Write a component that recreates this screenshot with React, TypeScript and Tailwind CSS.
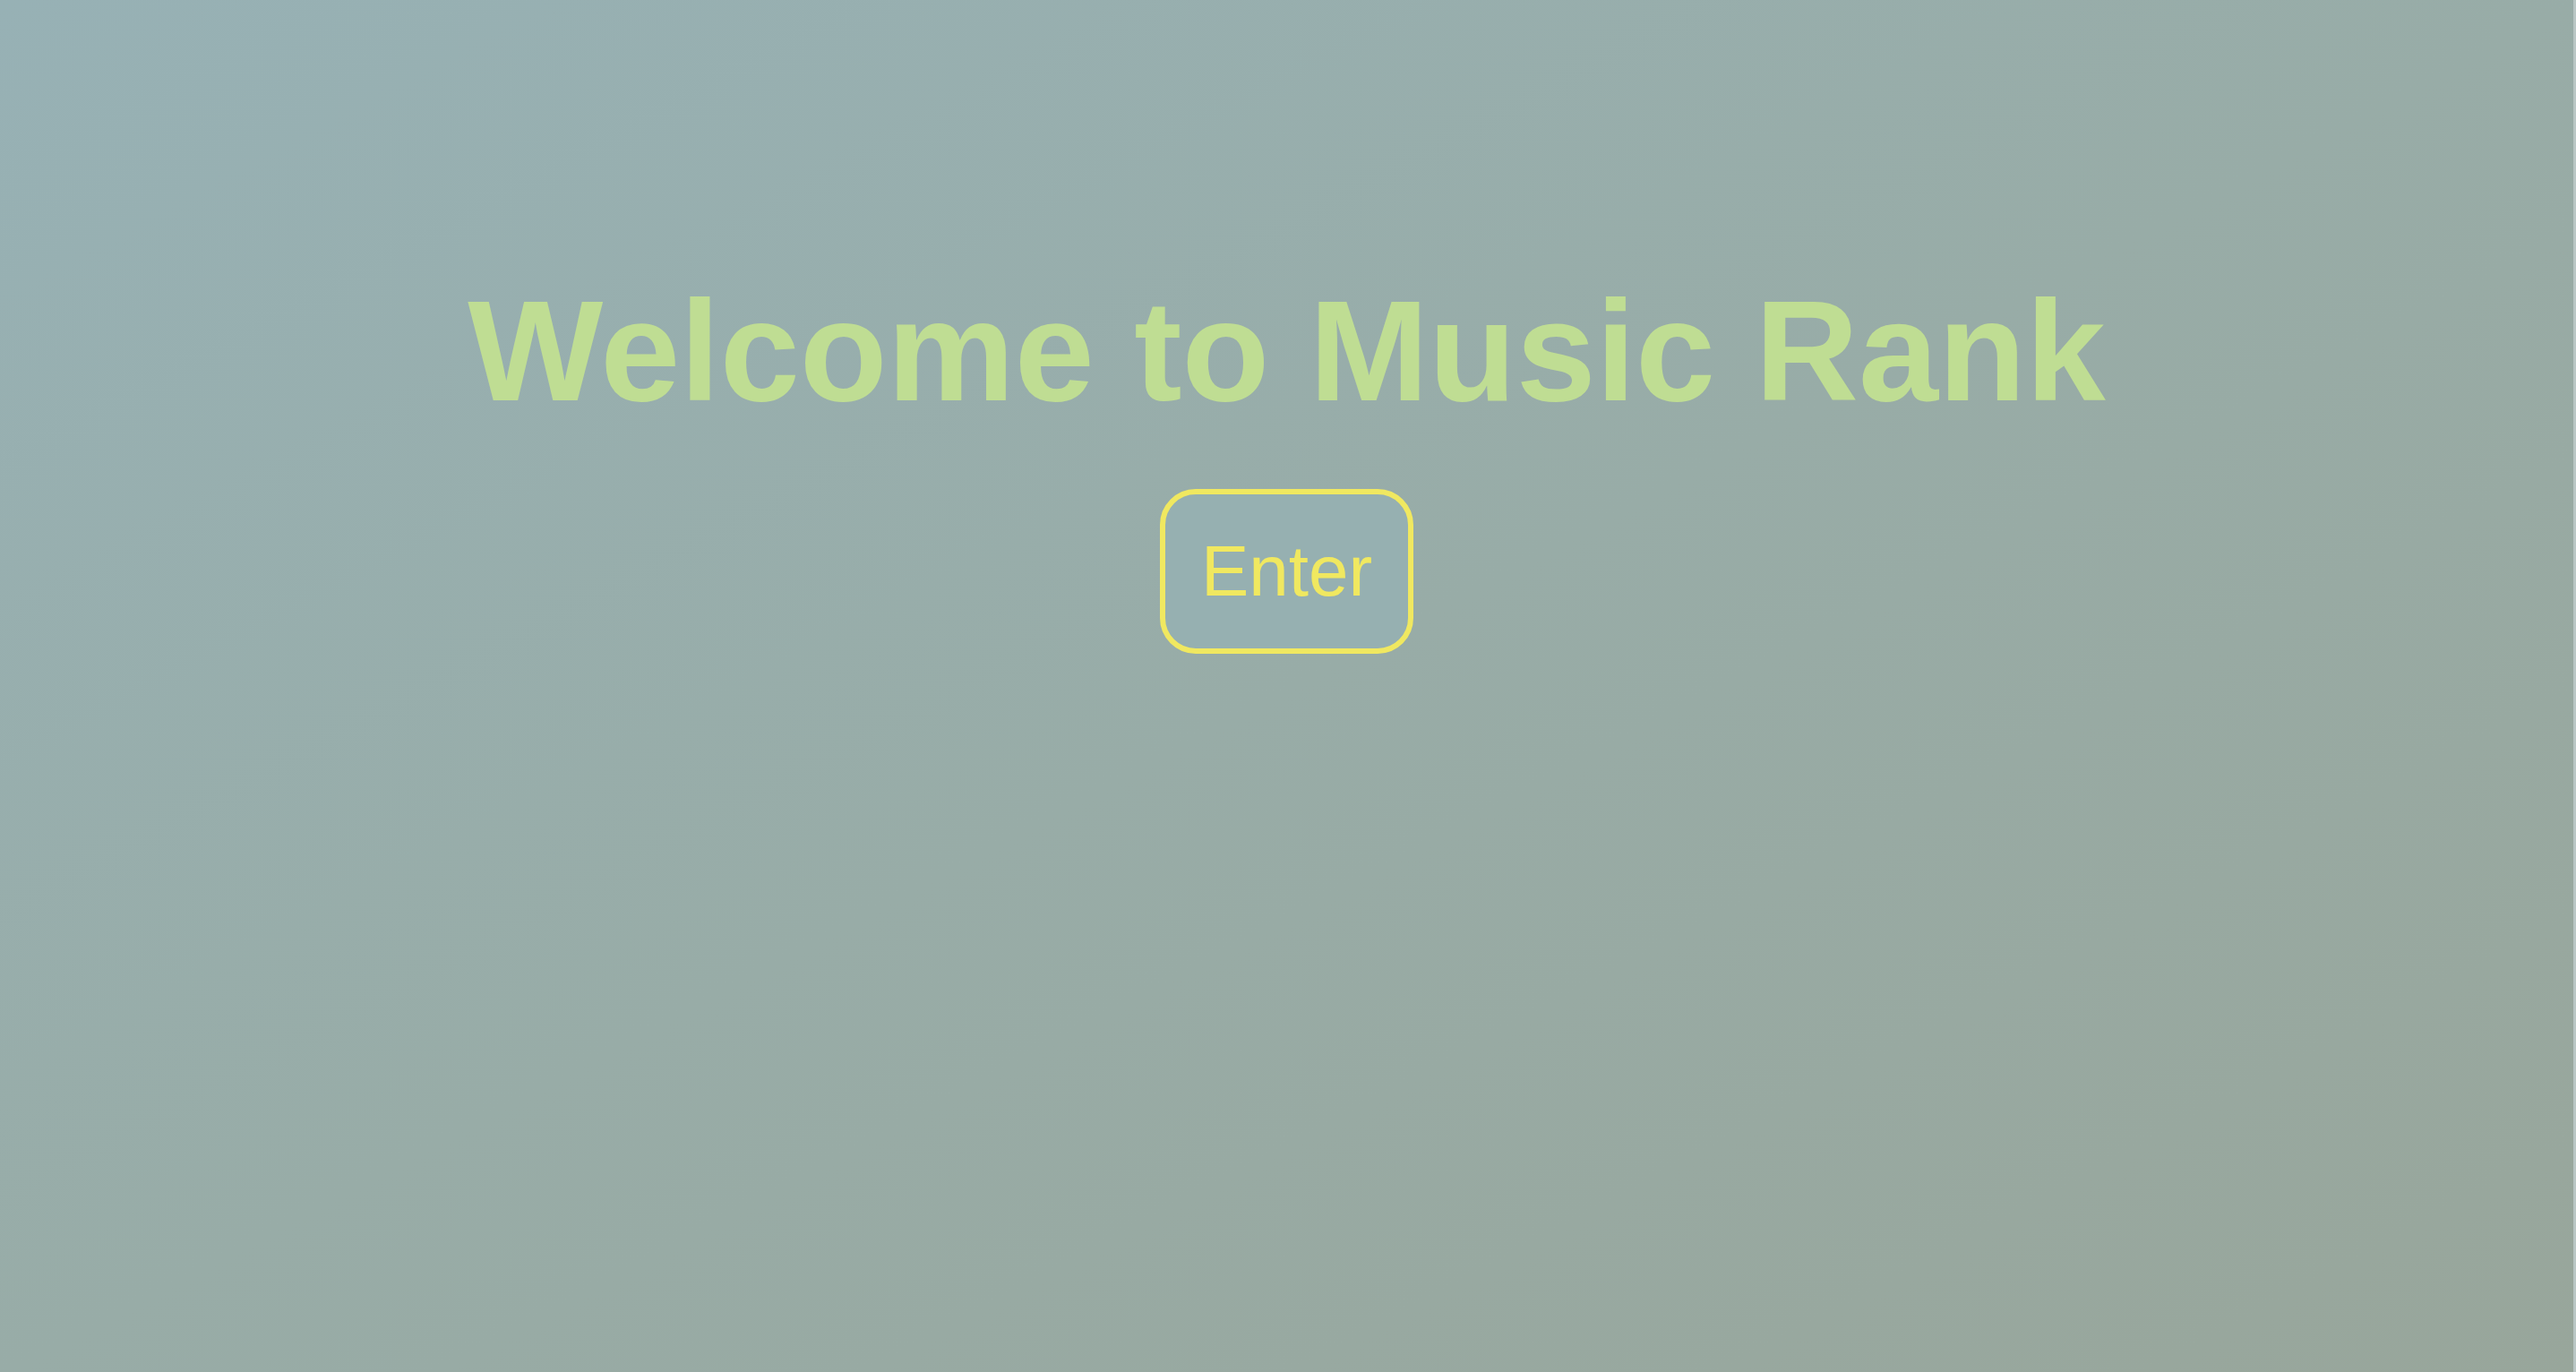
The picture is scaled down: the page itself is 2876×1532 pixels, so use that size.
import React from 'react';

const Landing: React.FC = () => {
  return (
    <div className="flex flex-col items-center pt-[300px]">
      <h1 className="text-[160px] leading-[1.149] font-bold text-[#bfdd93] font-['Liberation_Sans',Arial,sans-serif]">
        Welcome to Music Rank
      </h1>
      <button
        type="button"
        className="mt-[62px] px-[40px] py-[40px] border-[6px] border-[#f0e860] rounded-[40px] bg-[#96b0b1] text-[80px] leading-[1.149] text-[#f0e860] font-['Liberation_Sans',Arial,sans-serif] cursor-pointer"
      >
        Enter
      </button>
    </div>
  );
};

export default function App() {
  return (
    <div className="w-full h-[1532px] overflow-hidden bg-gradient-to-br from-[#97b1b5] via-[#98aca7] to-[#98a69b] border-r-[3px] border-[#b9c6c4]">
      <Landing />
    </div>
  );
}
